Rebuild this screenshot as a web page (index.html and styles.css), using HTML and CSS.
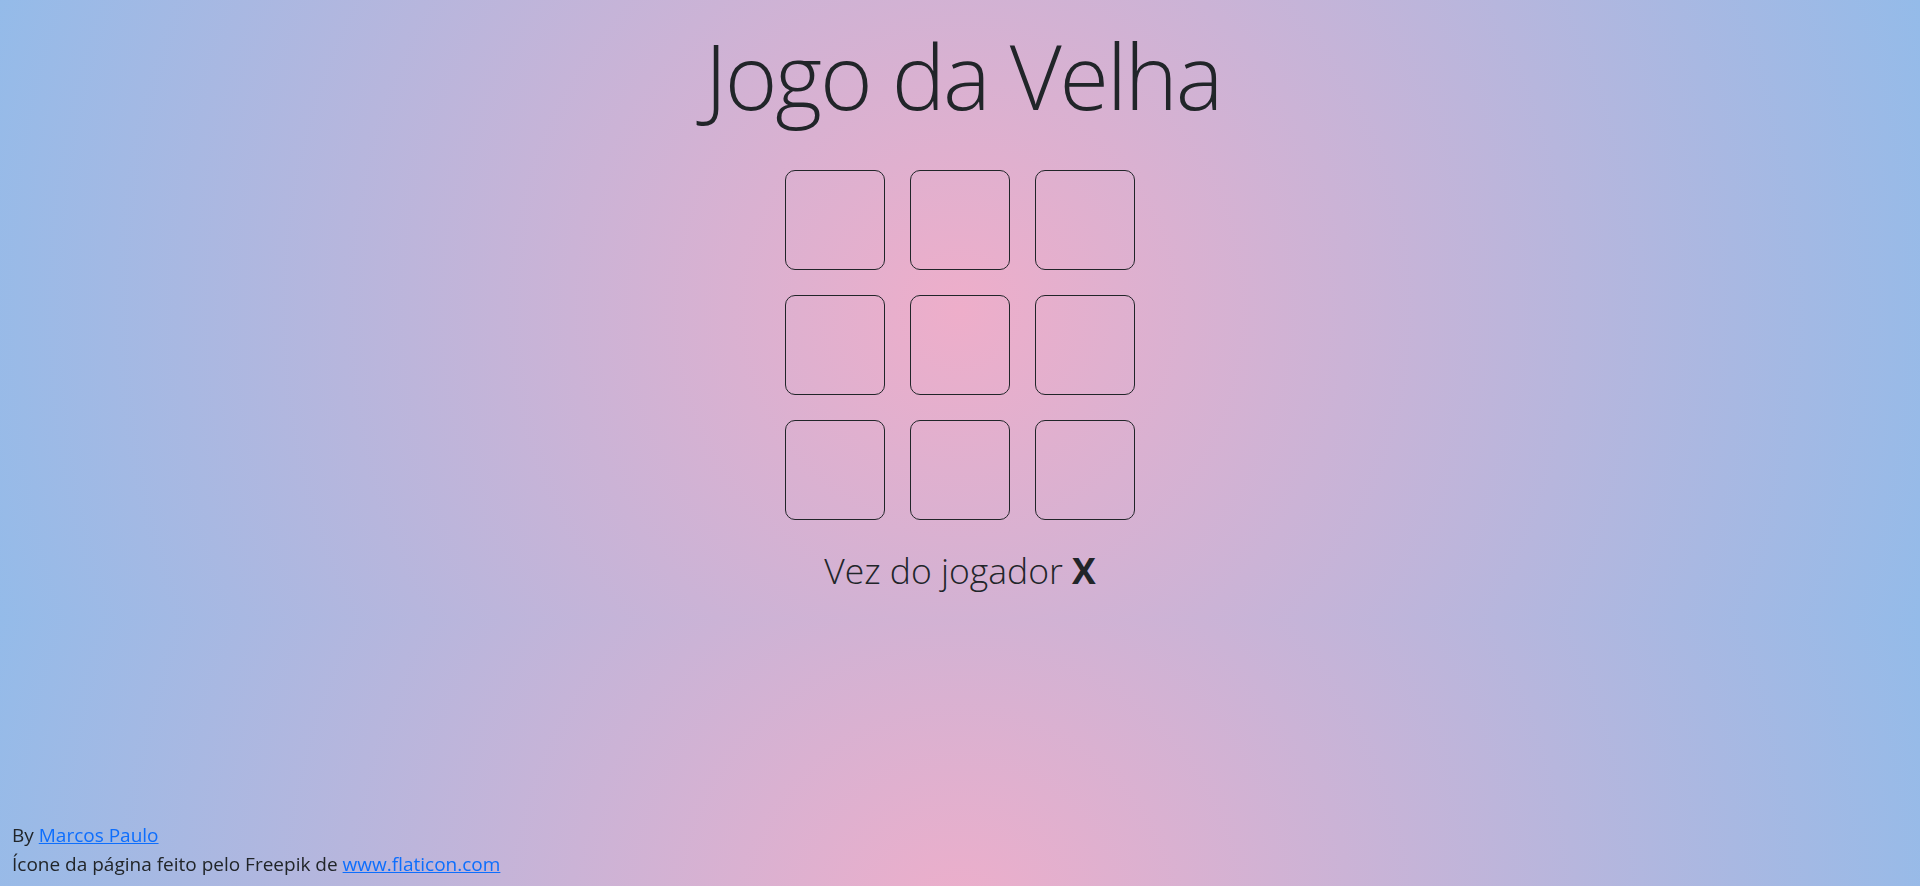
FILE: index.html
```html
<!DOCTYPE html>
<html lang="pt-BR">
<head>
<meta charset="utf-8">
<title>Jogo da Velha</title>
<link rel="stylesheet" href="styles.css">
</head>
<body>
<main class="game">
  <h1 class="title">Jogo da Velha</h1>
  <div class="board">
    <div class="cell"></div>
    <div class="cell"></div>
    <div class="cell"></div>
    <div class="cell"></div>
    <div class="cell"></div>
    <div class="cell"></div>
    <div class="cell"></div>
    <div class="cell"></div>
    <div class="cell"></div>
  </div>
  <p class="turn">Vez do jogador <strong>X</strong></p>
</main>
<footer class="credits">
  <p>By <a href="#">Marcos Paulo</a></p>
  <p>Ícone da página feito pelo Freepik de <a href="#">www.flaticon.com</a></p>
</footer>
</body>
</html>
```
FILE: styles.css
```css
html {
  min-height: 100%;
  background: radial-gradient(circle, rgb(238, 174, 202) 0%, rgb(148, 187, 233) 100%) 0 0 / 100% 620px repeat;
}
body {
  margin: 0;
  font-family: "Open Sans", "Noto Sans", sans-serif;
  color: #212529;
}
.game {
  display: flex;
  flex-direction: column;
  align-items: center;
}
.title {
  margin: 18px 0 0 6px;
  font-size: 90px;
  font-weight: 300;
  line-height: 115px;
  letter-spacing: -2.2px;
}
.board {
  margin-top: 37px;
  display: grid;
  grid-template-columns: repeat(3, 100px);
  grid-auto-rows: 100px;
  gap: 25px;
}
.cell {
  box-sizing: border-box;
  border: 1px solid #212529;
  border-radius: 10px;
}
.turn {
  margin: 25px 0 0;
  font-size: 35.5px;
  font-weight: 300;
  line-height: 50px;
}
.turn strong {
  font-weight: 700;
}
.credits {
  position: fixed;
  left: 12px;
  bottom: 7px;
  font-size: 19px;
  line-height: 29px;
}
.credits p {
  margin: 0;
}
.credits a {
  color: #0d6efd;
}
```
